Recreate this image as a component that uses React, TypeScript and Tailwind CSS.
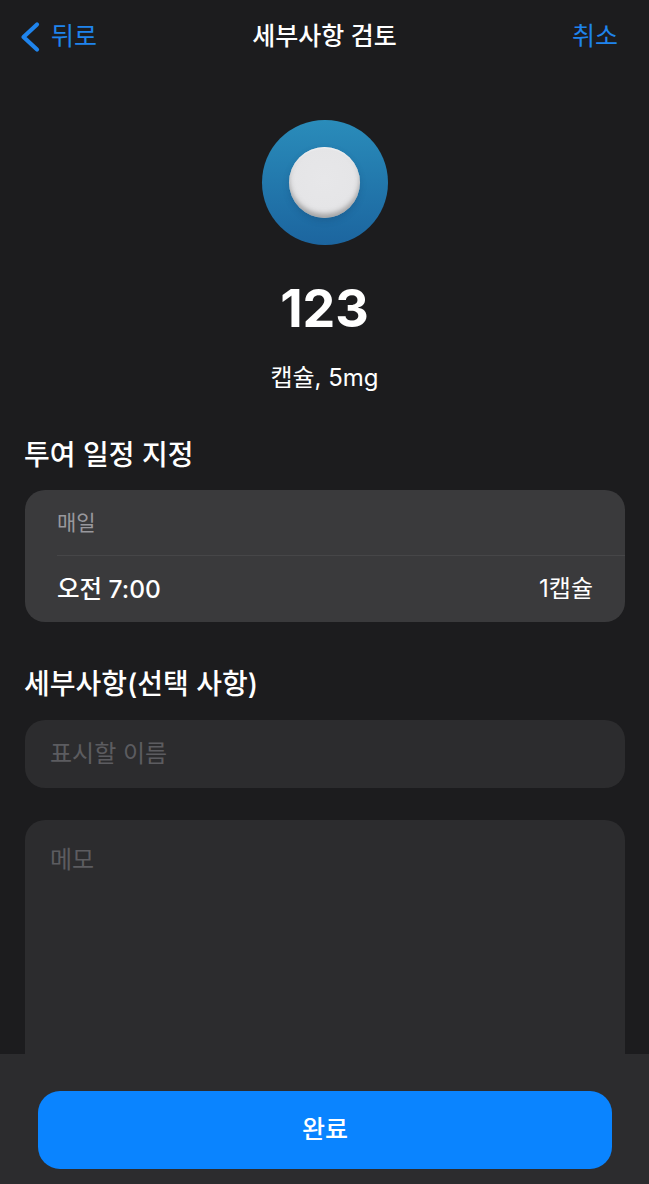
const FONT = "font-['Inter','Noto_Sans_CJK_KR',sans-serif]"

function Pill() {
    return (
        <div className="w-[126px] h-[125px] rounded-full bg-gradient-to-b from-[#2a8cba] to-[#1c659f] flex items-center justify-center">
            <div className="w-[71px] h-[71px] rounded-full bg-[radial-gradient(circle_at_50%_45%,#e7e7e9_0%,#e5e5e7_62%,#d6d6d8_80%,#b4b4b6_100%)] shadow-[inset_0_-4px_5px_rgba(110,110,110,0.5),inset_0_1px_2px_rgba(255,255,255,0.7),0_3px_6px_rgba(20,60,100,0.25)]" />
        </div>
    )
}

export default function App() {
    return (
        <div className={`${FONT} relative w-[649px] h-[1184px] overflow-hidden bg-[#1c1c1e] text-white`}>
            <header className="h-[73px] px-5 grid grid-cols-[1fr_auto_1fr] items-center">
                <div className="flex items-center gap-[11px] text-[#1f84ed]">
                    <svg width="20" height="32" viewBox="0 0 20 32" fill="none">
                        <path d="M17 3.5 L3.5 16 L17 28.5" stroke="currentColor" strokeWidth="4.2" strokeLinecap="round" strokeLinejoin="round" />
                    </svg>
                    <span className="text-[25px] leading-none">뒤로</span>
                </div>
                <h1 className="text-[25px] leading-none font-medium">세부사항 검토</h1>
                <span className="text-[25px] leading-none text-[#1f84ed] justify-self-end pr-[11px]">취소</span>
            </header>

            <section className="flex flex-col items-center pt-[47px]">
                <Pill />
                <div className="mt-[33px] text-[52px] leading-[62px] font-bold">123</div>
                <div className="mt-[21px] text-[24px] leading-[34px]">캡슐, 5mg</div>
            </section>

            <section className="pl-[25px] pr-[24px] mt-[40px]">
                <h2 className="-ml-px text-[28px] leading-[40px] font-medium">투여 일정 지정</h2>
                <div className="mt-[15px] rounded-[20px] bg-[#3a3a3c] pl-8">
                    <div className="h-[66px] flex items-center border-b border-[#464648] text-[21px] text-[#98989d]">매일</div>
                    <div className="h-[66px] flex items-center justify-between pr-8">
                        <span className="text-[24.5px] font-medium">오전 7:00</span>
                        <span className="text-[24px]">1캡슐</span>
                    </div>
                </div>

                <h2 className="-ml-px mt-[42px] text-[28px] leading-[40px] font-medium">세부사항(선택 사항)</h2>
                <div className="mt-[16px] h-[68px] rounded-[20px] bg-[#2c2c2e] px-[25px] flex items-center text-[24px] text-[#5c5c60]">표시할 이름</div>
                <div className="mt-[32px] h-[300px] rounded-[20px] bg-[#2c2c2e] px-[25px] pt-[23px] text-[24px] leading-[34px] text-[#5c5c60]">메모</div>
            </section>

            <footer className="absolute left-0 right-0 bottom-0 h-[130px] bg-[#2c2c2e] pl-[38px] pr-[37px] pt-[37px]">
                <button className="w-full h-[78px] rounded-[22px] bg-[#0a84ff] text-[25px] font-medium text-white">완료</button>
            </footer>
        </div>
    )
}
